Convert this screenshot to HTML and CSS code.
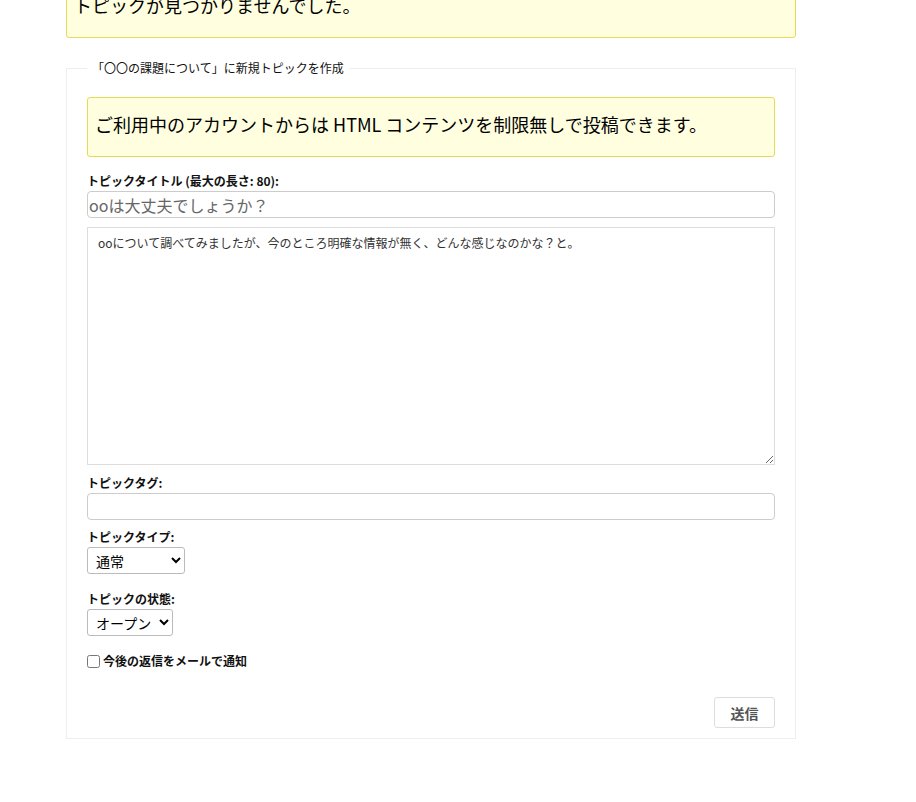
FILE: index.html
```html
<!DOCTYPE html>
<html lang="ja">
<head>
<meta charset="utf-8">
<title>新規トピックを作成</title>
<link rel="stylesheet" href="styles.css">
</head>
<body>
<div class="forums">
  <div class="notice notice-top">
    <p class="notice-text">トピックが見つかりませんでした。</p>
  </div>
  <form class="topic-form">
    <fieldset class="form-box">
      <legend class="form-legend">「〇〇の課題について」に新規トピックを作成</legend>
      <div class="notice">
        <p class="notice-text">ご利用中のアカウントからは HTML コンテンツを制限無しで投稿できます。</p>
      </div>
      <div class="field">
        <label class="field-label" for="title">トピックタイトル (最大の長さ: 80):</label>
        <input class="text-input title-input" id="title" type="text" value="ooは大丈夫でしょうか？">
      </div>
      <div class="field field-content">
        <textarea class="content-input">ooについて調べてみましたが、今のところ明確な情報が無く、どんな感じなのかな？と。</textarea>
      </div>
      <div class="field field-tags">
        <label class="field-label" for="tags">トピックタグ:</label>
        <input class="text-input" id="tags" type="text">
      </div>
      <div class="field field-type">
        <label class="field-label" for="type">トピックタイプ:</label>
        <select class="select select-type" id="type">
          <option>通常</option>
          <option>先頭固定</option>
        </select>
      </div>
      <div class="field field-status">
        <label class="field-label" for="status">トピックの状態:</label>
        <select class="select select-status" id="status">
          <option>オープン</option>
          <option>クローズ</option>
        </select>
      </div>
      <div class="field field-subscribe">
        <input class="check" type="checkbox" id="subscribe">
        <label class="check-label" for="subscribe">今後の返信をメールで通知</label>
      </div>
      <div class="form-actions">
        <button class="submit-btn" type="button">送信</button>
      </div>
    </fieldset>
  </form>
</div>
</body>
</html>
```
FILE: styles.css
```css
html, body {
  margin: 0;
  padding: 0;
  background: #fff;
}
body {
  font-family: "Noto Sans CJK JP", "Noto Sans", sans-serif;
  font-size: 12px;
  color: #000;
}
.forums {
  width: 730px;
  margin: -22px 0 0 66px;
}
.notice {
  box-sizing: border-box;
  height: 60px;
  border: 1px solid #e6db55;
  border-radius: 3px;
  background: #ffffe0;
  padding: 0 7px;
  margin: 5px 0 15px;
}
.notice-top {
  margin: 0 0 22px;
}
.notice-text {
  margin: 15px 0 0;
  font-size: 18px;
  line-height: 22px;
  white-space: nowrap;
}
.topic-form {
  margin: 0;
}
.form-box {
  margin: 0 0 10px;
  border: 1px solid #eee;
  padding: 16px 20px 10px;
  min-width: 0;
}
.form-legend {
  padding: 0 5px;
  font-size: 12px;
  line-height: 16px;
  color: #111;
}
.field {
  margin: 0;
}
.field-label {
  display: block;
  font-weight: bold;
  font-size: 12px;
  line-height: 18px;
  margin-bottom: 1px;
  color: #111;
}
.text-input {
  display: block;
  box-sizing: border-box;
  width: 100%;
  height: 27px;
  margin: 0;
  border: 1px solid #ccc;
  border-radius: 4px;
  padding: 0 1px;
  font-family: inherit;
  font-size: 16px;
  color: #666;
  background: #fff;
}
.field-content {
  margin-top: 9px;
}
.content-input {
  display: block;
  box-sizing: border-box;
  width: 100%;
  height: 238px;
  margin: 0;
  border: 1px solid #ddd;
  border-radius: 0;
  padding: 6px 10px;
  font-family: inherit;
  font-size: 12px;
  line-height: 17px;
  color: #333;
  resize: vertical;
}
.field-tags {
  margin-top: 9px;
}
.field-type {
  margin-top: 8px;
}
.field-status {
  margin-top: 16px;
}
.select {
  display: block;
  box-sizing: border-box;
  height: 27px;
  margin: 0;
  border: 1px solid #bbb;
  border-radius: 3px;
  padding: 0 4px;
  font-family: inherit;
  font-size: 14px;
  color: #000;
  background: #fff;
}
.select-type {
  width: 98px;
}
.select-status {
  width: 86px;
}
.field-subscribe {
  margin-top: 16px;
  display: flex;
  align-items: center;
  height: 18px;
}
.check {
  width: 13px;
  height: 13px;
  margin: 0 3px 0 0;
}
.check-label {
  font-weight: bold;
  font-size: 12px;
  line-height: 18px;
  color: #111;
}
.form-actions {
  display: flex;
  justify-content: flex-end;
  margin-top: 27px;
}
.submit-btn {
  box-sizing: border-box;
  width: 61px;
  height: 31px;
  border: 1px solid #ddd;
  border-radius: 3px;
  background: #fff;
  font-family: inherit;
  font-size: 14px;
  font-weight: bold;
  color: #555;
  padding: 0;
  cursor: pointer;
}
```
